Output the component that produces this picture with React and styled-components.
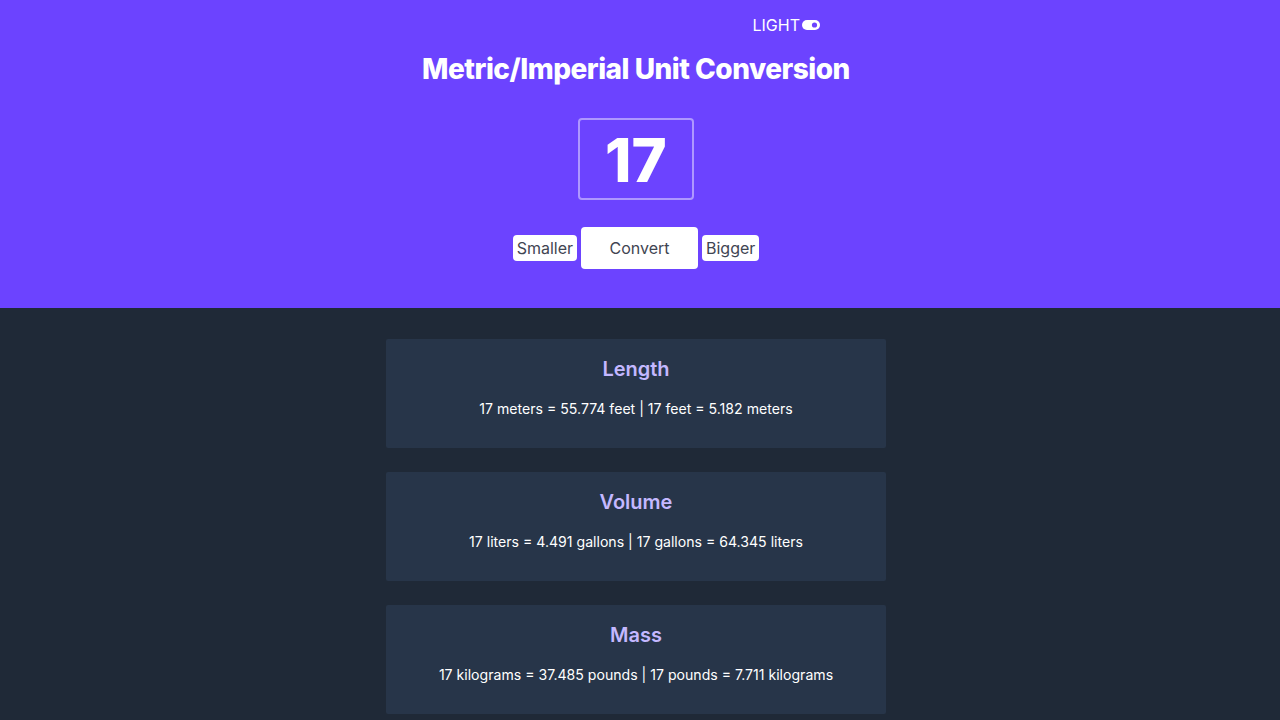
import React from 'react'
import styled, { createGlobalStyle } from 'styled-components'

const GlobalStyle = createGlobalStyle`
    html, body {
        margin: 0;
        padding: 0;
        background: #1f2937;
        font-family: Inter, "Noto Sans", sans-serif;
    }
`

const conversions = [
    { title: 'Length', text: '17 meters = 55.774 feet | 17 feet = 5.182 meters' },
    { title: 'Volume', text: '17 liters = 4.491 gallons | 17 gallons = 64.345 liters' },
    { title: 'Mass', text: '17 kilograms = 37.485 pounds | 17 pounds = 7.711 kilograms' }
]

const ToggleIcon = () => (
    <svg width="18" height="10" viewBox="0 0 18 10">
        <rect x="0" y="0" width="18" height="10" rx="5" fill="#fff" />
        <circle cx="12.5" cy="5" r="2.6" fill="#6c43ff" />
    </svg>
)

const App = () => {
    return (
        <Page>
            <GlobalStyle />
            <Header>
                <TopBar>
                    <ModeLabel>LIGHT</ModeLabel>
                    <ToggleIcon />
                </TopBar>
                <Title>Metric/Imperial Unit Conversion</Title>
                <NumberBox>17</NumberBox>
                <Buttons>
                    <Button>Smaller</Button>
                    <Button $big>Convert</Button>
                    <Button>Bigger</Button>
                </Buttons>
            </Header>
            <Main>
                {
                    conversions.map((item) => (
                        <Card key={item.title}>
                            <CardTitle>{item.title}</CardTitle>
                            <CardText>{item.text}</CardText>
                        </Card>
                    ))
                }
            </Main>
        </Page>
    )
}

const Page = styled.div`
    min-height: 100vh;
`

const Header = styled.header`
    background: #6c43ff;
    height: 308px;
    padding-right: 8px;
    display: flex;
    flex-direction: column;
    align-items: center;
    box-sizing: border-box;
`

const TopBar = styled.div`
    width: 368px;
    height: 50px;
    display: flex;
    justify-content: flex-end;
    align-items: center;
    gap: 2px;
`

const ModeLabel = styled.span`
    color: #fff;
    font-size: 16px;
`

const Title = styled.h1`
    margin: 0;
    color: #fff;
    font-size: 28px;
    font-weight: 800;
    letter-spacing: -0.5px;
    line-height: 38px;
`

const NumberBox = styled.div`
    margin-top: 30px;
    width: 116px;
    height: 82px;
    box-sizing: border-box;
    border: 2px solid rgba(255, 255, 255, 0.45);
    border-radius: 4px;
    color: #fff;
    font-size: 60px;
    font-weight: 800;
    display: flex;
    align-items: center;
    justify-content: center;
    padding-top: 2px;
`

const Buttons = styled.div`
    margin-top: 27px;
    display: flex;
    align-items: center;
    gap: 4px;
`

const Button = styled.button`
    font-family: Inter, sans-serif;
    background: #fff;
    border: none;
    border-radius: 4px;
    color: #3f4552;
    font-size: 16px;
    padding: ${(p) => (p.$big ? '0 28px' : '0 4px')};
    height: ${(p) => (p.$big ? '42px' : '26px')};
    min-width: ${(p) => (p.$big ? '117px' : '0')};
`

const Main = styled.main`
    padding: 31px 8px 0 0;
    display: flex;
    flex-direction: column;
    align-items: center;
    gap: 24px;
`

const Card = styled.section`
    width: 500px;
    height: 109px;
    box-sizing: border-box;
    background: #273549;
    border-radius: 2px;
    padding-top: 18px;
    text-align: center;
`

const CardTitle = styled.h2`
    margin: 0;
    color: #c4b8ff;
    font-size: 20px;
    font-weight: 600;
    line-height: 24px;
`

const CardText = styled.p`
    margin: 18px 0 0;
    color: #fff;
    font-size: 14.1px;
    line-height: 20px;
`

export default App
